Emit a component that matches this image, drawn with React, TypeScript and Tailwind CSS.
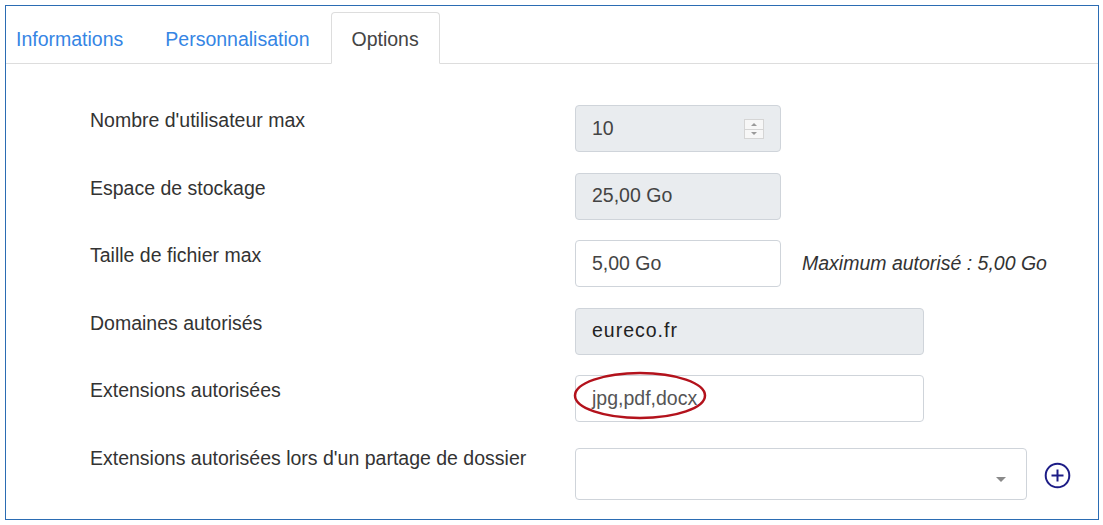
const font = { fontFamily: '"Liberation Sans", Arial, sans-serif' };

function Spinner() {
  return (
    <div className="absolute right-[16px] top-[13px] w-[20px] h-[20px] border border-[#d5d5d5] bg-[#f7f7f7] flex flex-col">
      <div className="flex-1 flex items-center justify-center border-b border-[#d5d5d5]">
        <div className="w-0 h-0 border-l-[3px] border-r-[3px] border-b-[3px] border-l-transparent border-r-transparent border-b-[#9a9a9a]" />
      </div>
      <div className="flex-1 flex items-center justify-center">
        <div className="w-0 h-0 border-l-[3px] border-r-[3px] border-t-[3px] border-l-transparent border-r-transparent border-t-[#9a9a9a]" />
      </div>
    </div>
  );
}

function Row({ label, children, top = 0 }: { label: string; children: React.ReactNode; top?: number }) {
  return (
    <div className="flex h-[47.5px]">
      <div className="w-[485px] shrink-0 pt-[2px] leading-[27px] text-[#333]">{label}</div>
      <div className="flex items-start" style={{ marginTop: top }}>
        {children}
      </div>
    </div>
  );
}

export default function App() {
  const box = 'h-[47px] border border-[#cfd4da] rounded-[4px] pl-[16px] flex items-center';

  return (
    <div className="w-[1103px] h-[525px] bg-white pt-[5px] pl-[5px] text-[19.5px]" style={font}>
      <div className="w-[1094px] h-[515px] border border-[#2b6cb3]">
        {/* Tabs */}
        <div className="h-[58px] flex items-end border-b border-[#dddddd]">
          <div className="pl-[10px] pr-[21px] h-[52px] flex items-center pt-[5px] text-[#3585e4]">Informations</div>
          <div className="px-[21px] h-[52px] flex items-center pt-[5px] text-[#3585e4]">Personnalisation</div>
          <div className="px-[20px] h-[52px] -mb-px flex items-center pt-[4px] bg-white border border-[#dddddd] border-b-white rounded-t-[4px] text-[#444]">
            Options
          </div>
        </div>

        {/* Form */}
        <div className="pt-[41px] pl-[84px] flex flex-col gap-[20px]">
          <Row label="Nombre d'utilisateur max">
            <div className={`${box} relative w-[206px] bg-[#e9ecef] text-[#444]`}>
              10
              <Spinner />
            </div>
          </Row>
          <Row label="Espace de stockage">
            <div className={`${box} w-[206px] bg-[#e9ecef] text-[#444]`}>25,00 Go</div>
          </Row>
          <Row label="Taille de fichier max">
            <div className={`${box} w-[206px] bg-white text-[#444]`}>5,00 Go</div>
            <span className="ml-[21px] self-center italic text-[#333]">Maximum autorisé : 5,00 Go</span>
          </Row>
          <Row label="Domaines autorisés">
            <div className={`${box} w-[349px] bg-[#e9ecef] text-[#222] tracking-[1px]`}>eureco.fr</div>
          </Row>
          <Row label="Extensions autorisées">
            <div className={`${box} relative w-[349px] bg-white text-[#555]`}>
              jpg,pdf,docx
              <svg className="absolute left-[-3px] top-[-5px]" width="136" height="50" viewBox="0 0 136 50">
                <ellipse cx="67" cy="24.5" rx="65" ry="22.5" fill="none" stroke="#b3121c" strokeWidth="2.5" />
              </svg>
            </div>
          </Row>
          <Row label="Extensions autorisées lors d'un partage de dossier" top={5}>
            <div className="relative w-[452px] h-[52px] border border-[#cfd4da] rounded-[4px] bg-white">
              <div className="absolute right-[20px] top-[28px] w-0 h-0 border-l-[5px] border-r-[5px] border-t-[5px] border-l-transparent border-r-transparent border-t-[#8a8a8a]" />
            </div>
            <svg className="ml-[17px] mt-[14px]" width="27" height="27" viewBox="0 0 27 27">
              <circle cx="13.5" cy="13.5" r="11.8" fill="none" stroke="#1c1c86" strokeWidth="2" />
              <path d="M13.5 7.5v12M7.5 13.5h12" stroke="#1c1c86" strokeWidth="2" />
            </svg>
          </Row>
        </div>
      </div>
    </div>
  );
}
